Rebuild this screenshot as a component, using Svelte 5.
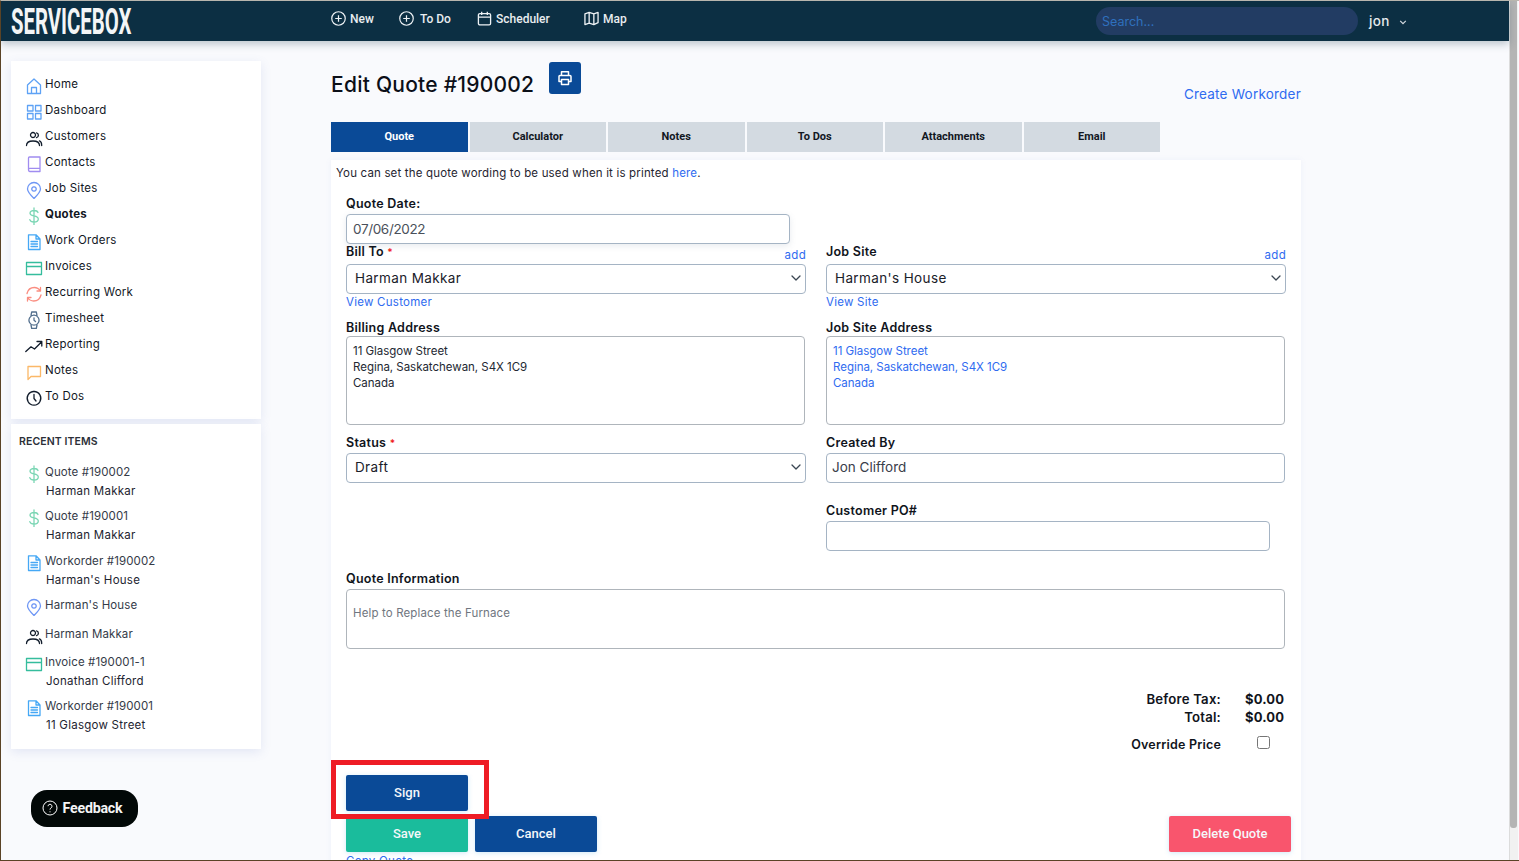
<script>
  const icons = {
    home: { c: '#5ea2f5', d: 'M2.5 8 L9 2 L15.5 8 V16.5 H2.5 Z M6.5 16.5 V10.5 H11.5 V16.5' },
    dash: { c: '#5ea2f5', d: 'M2.5 2.5H8V8H2.5Z M10.5 2.5H16V8H10.5Z M2.5 10.5H8V16H2.5Z M10.5 10.5H16V16H10.5Z' },
    people: { c: '#111c2b', d: 'M8 3.500a2.500 2.500 0 1 1-.01 0 M1.500 16.500c0-3 1.500-4.500 6.500-4.500s6.500 1.500 6.500 4.500 M11.500 3.800c2.500.3 2.500 4.500 0 4.800 M14.500 11.800c1.600.6 2.200 2.200 2.200 4.700' },
    book: { c: '#a08cf0', d: 'M3.500 15V3a1 1 0 0 1 1-1H15V16.500H4.800a1.500 1.500 0 0 1-1.300-1.500Zm0 0a1.500 1.500 0 0 1 1.300-1.700H15' },
    pin: { c: '#6f97f5', d: 'M9 17.500C5 13.500 2.500 11 2.500 8a6.500 6.500 0 0 1 13 0c0 3-2.500 5.500-6.500 9.500Z M9 5.800a2.200 2.200 0 1 1-.01 0' },
    dollar: { c: '#7bd6b4', d: 'M13 5.500C12.500 4 11 3.500 9 3.500 6.500 3.500 5 4.700 5 6.300 5 10 13.300 7.800 13.300 12 13.300 13.800 11.500 15 9 15 6.800 15 5.300 14.200 4.800 12.600 M9 1V18' },
    doc: { c: '#45a8f5', d: 'M3.500 1.800H11L15 6V16.500H3.500Z M11 1.800V6H15 M6 8.500H12.500 M6 11H12.500 M6 13.500H12.500' },
    card: { c: '#35bd9d', d: 'M1.500 3.500H16.500V15.500H1.500Z M1.500 7.500H16.500' },
    sync: { c: '#fa8d80', d: 'M2 8.500C3 4.500 6 2.500 9.300 2.500 12 2.500 14 3.800 15.500 6 M15.500 2.500V6H12 M16 10C15 14 12 16 8.700 16 6 16 4 14.700 2.500 12.500 M2.500 16V12.500H6' },
    watch: { c: '#54708e', d: 'M6 4.500 6.700 1H11.300L12 4.500 M6 14 6.700 17.500H11.300L12 14 M9 4.200a5 5 0 1 1-.01 0 M9 6.800V9.200L10.500 10.500' },
    trend: { c: '#111c2b', d: 'M0.800 14.500 6 9.800 9.500 12 16.500 5 M12 4.500H16.800V9' },
    note: { c: '#fbb868', d: 'M3 3.500H15.500V13.500H6L3 16.500Z' },
    clock: { c: '#111c2b', d: 'M9 2.500a6.800 6.800 0 1 1-.01 0 M9 5.500V9.500L11 12' }
  };

  const nav = [
    ['home', 'Home'], ['dash', 'Dashboard'], ['people', 'Customers'], ['book', 'Contacts'],
    ['pin', 'Job Sites'], ['dollar', 'Quotes', true], ['doc', 'Work Orders'], ['card', 'Invoices'],
    ['sync', 'Recurring Work'], ['watch', 'Timesheet'], ['trend', 'Reporting'], ['note', 'Notes'], ['clock', 'To Dos']
  ];

  const recent = [
    ['dollar', 'Quote #190002', 'Harman Makkar'],
    ['dollar', 'Quote #190001', 'Harman Makkar'],
    ['doc', 'Workorder #190002', "Harman's House"],
    ['pin', "Harman's House"],
    ['people', 'Harman Makkar'],
    ['card', 'Invoice #190001-1', 'Jonathan Clifford'],
    ['doc', 'Workorder #190001', '11 Glasgow Street']
  ];

  const tabs = ['Quote', 'Calculator', 'Notes', 'To Dos', 'Attachments', 'Email'];
</script>

{#snippet icon(name)}
  <svg class="ico" viewBox="0 0 18 18" fill="none" stroke={icons[name].c} stroke-width="1.300" stroke-linejoin="round" stroke-linecap="round">
    <path d={icons[name].d} />
  </svg>
{/snippet}

{#snippet chev()}
  <svg class="chev" viewBox="0 0 10 6" fill="none" stroke="#3a4652" stroke-width="1.300" stroke-linecap="round" stroke-linejoin="round"><path d="M1 1l4 4 4-4" /></svg>
{/snippet}

<div class="page">
  <header class="top">
    <div class="logo"><span>SERVICEBOX</span></div>
    <nav class="topnav">
      <span class="tn new">
        <svg viewBox="0 0 16 16" fill="none" stroke="#eef2f5" stroke-width="1.300"><circle cx="8" cy="8" r="7.200" /><path d="M8 4.500v7M4.500 8h7" /></svg>New
      </span>
      <span class="tn todo">
        <svg viewBox="0 0 16 16" fill="none" stroke="#eef2f5" stroke-width="1.300"><circle cx="8" cy="8" r="7.200" /><path d="M8 4.500v7M4.500 8h7" /></svg>To Do
      </span>
      <span class="tn sched">
        <svg viewBox="0 0 16 16" fill="none" stroke="#eef2f5" stroke-width="1.400"><rect x="1.500" y="2.800" width="13" height="12" rx="1.500" /><path d="M1.500 6.500h13M5 .8v3.500M11 .8v3.500" /></svg>Scheduler
      </span>
      <span class="tn map">
        <svg viewBox="0 0 16 16" fill="none" stroke="#eef2f5" stroke-width="1.400" stroke-linejoin="round"><path d="M1 3 5.500 1.500l5 1.500L15 1.500v11L10.500 14.500l-5-1.500L1 14.500Z M5.500 1.500v11.500M10.500 3v11.500" /></svg>Map
      </span>
    </nav>
    <div class="search">Search...</div>
    <div class="user">jon
      <svg viewBox="0 0 10 6" fill="none" stroke="#d5dbe0" stroke-width="1.500"><path d="M1.500 1l3.500 3.500L8.500 1" /></svg>
    </div>
  </header>

  <div class="body">
    <aside class="side">
      <div class="card navcard">
        {#each nav as [ic, label, active]}
          <div class="navitem" class:active>
            {@render icon(ic)}<span>{label}</span>
          </div>
        {/each}
      </div>
      <div class="card recent">
        <div class="rtitle">RECENT ITEMS</div>
        {#each recent as [ic, a, b]}
          <div class="ritem" class:single={!b}>
            <div class="rline">{@render icon(ic)}<span>{a}</span></div>
            {#if b}<div class="rsub">{b}</div>{/if}
          </div>
        {/each}
      </div>
      <div class="feedback">
        <svg viewBox="0 0 16 16" fill="none" stroke="#fff" stroke-width="1"><circle cx="8" cy="8" r="7" /><path d="M6 6.200a2 2 0 1 1 3 1.800c-.7.400-1 .8-1 1.600" /><path d="M8 11.300v1" /></svg>
        Feedback
      </div>
    </aside>

    <main class="main">
      <div class="titlebar">
        <h1>Edit Quote #190002</h1>
        <button class="print" aria-label="Print">
          <svg viewBox="0 0 16 16" fill="none" stroke="#fff" stroke-width="1.500" stroke-linejoin="round"><path d="M4.500 5.500V1.800h7v3.700M4.500 11.500H2V6.500a1 1 0 0 1 1-1h10a1 1 0 0 1 1 1v5h-2.500" /><path d="M4.500 9.500h7v5h-7z" /></svg>
        </button>
        <a class="create">Create Workorder</a>
      </div>

      <div class="tabs">
        {#each tabs as t, i}
          <div class="tab" class:on={i === 0}>{t}</div>
        {/each}
      </div>

      <section class="panel">
        <p class="hint">You can set the quote wording to be used when it is printed <a>here</a>.</p>

        <div class="form">
          <span class="lab date-l">Quote Date:</span>
          <div class="field date">07/06/2022</div>

          <div class="grid two">
            <div class="col">
              <div class="labrow"><span class="lab">Bill To <i>*</i></span><a class="add">add</a></div>
              <div class="field select">Harman Makkar {@render chev()}</div>
              <a class="sub">View Customer</a>
              <span class="lab gap">Billing Address</span>
              <div class="area">11 Glasgow Street<br />Regina, Saskatchewan, S4X 1C9<br />Canada</div>
              <span class="lab gap2">Status <i>*</i></span>
              <div class="field select status">Draft {@render chev()}</div>
            </div>
            <div class="col">
              <div class="labrow"><span class="lab">Job Site</span><a class="add">add</a></div>
              <div class="field select">Harman's House {@render chev()}</div>
              <a class="sub">View Site</a>
              <span class="lab gap">Job Site Address</span>
              <div class="area blue">11 Glasgow Street<br />Regina, Saskatchewan, S4X 1C9<br />Canada</div>
              <span class="lab gap2">Created By</span>
              <div class="field created">Jon Clifford</div>
              <span class="lab po-l">Customer PO#</span>
              <div class="field po"></div>
            </div>
          </div>

          <span class="lab qi-l">Quote Information</span>
          <div class="area info">Help to Replace the Furnace</div>

          <div class="totals">
            <div class="trow"><span>Before Tax:</span><b>$0.00</b></div>
            <div class="trow"><span>Total:</span><b>$0.00</b></div>
            <div class="trow over"><span>Override Price</span><b><input type="checkbox" /></b></div>
          </div>

          <div class="signrow">
            <button class="btn blue-b">Sign</button>
            <div class="annot"></div>
          </div>
          <div class="actions">
            <button class="btn green">Save</button>
            <button class="btn blue-b">Cancel</button>
            <button class="btn red">Delete Quote</button>
          </div>
          <a class="copy">Copy Quote</a>
        </div>
      </section>
    </main>
  </div>

  <div class="scrollbar"><div class="thumb"></div></div>
</div>

<style>
  :global(body) { margin: 0; background: #f9fafd; overflow: hidden; }
  .page {
    position: relative;
    width: 1519px; height: 861px; overflow: hidden;
    box-sizing: border-box;
    background: #f9fafd;
    border-top: 1px solid #b9b6ae;
    border-left: 1px solid #5a4326;
    border-bottom: 1px solid #5a4326;
    font-family: Inter, "Open Sans", sans-serif;
    color: #12171f;
    font-size: 11.5px;
    letter-spacing: .25px;
  }
  a { color: #2f6bf0; text-decoration: none; }

  .top {
    height: 40px; background: #0c2f43;
    display: flex; align-items: center;
    box-shadow: 0 3px 8px rgba(40,70,90,.3);
    position: relative; z-index: 2;
    width: 1508px; box-sizing: border-box;
  }
  .logo { width: 330px; padding: 2px 0 0 10px; box-sizing: border-box; height: 40px; display: flex; align-items: center; flex: none; }
  .logo span {
    font-family: "Roboto", sans-serif; font-weight: 700; font-size: 36px; color: #f3f5f6; letter-spacing: 0;
    display: inline-block; transform: scaleX(.565); transform-origin: left center; white-space: nowrap;
  }
  .topnav { display: flex; font-family: Roboto, sans-serif; font-size: 12px; font-weight: 500; color: #e9edf0; letter-spacing: 0; height: 40px; align-items: center; padding-bottom: 5px; box-sizing: border-box; }
  .tn { display: flex; align-items: center; gap: 4px; }
  .tn svg { width: 15px; height: 15px; }
  .new { width: 68px; }
  .todo { width: 79px; gap: 6px; }
  .sched { width: 106px; margin-left: -1px; gap: 4px; }
  .map { width: 120px; margin-left: 1px; }
  .search {
    margin-left: auto;
    width: 262px; height: 28px; box-sizing: border-box; padding: 0 6px;
    border-radius: 14px; background: #223c63; color: #2f70bd;
    font-size: 12.500px; line-height: 30px; flex: none; letter-spacing: 0;
    margin-right: 11px;
  }
  .user { width: 140px; flex: none; font-size: 13.5px; color: #e6eaed; font-weight: 500; display: flex; align-items: center; letter-spacing: .3px; box-sizing: border-box; }
  .user svg { width: 8px; height: 5px; margin-left: 9px; margin-top: 3px; }

  .body { display: flex; height: 819px; }
  .side { width: 330px; flex: none; padding: 20px 0 0 10px; box-sizing: border-box; }
  .card { width: 250px; background: #fff; box-shadow: 0 3px 10px rgba(90,110,190,.14); box-sizing: border-box; }
  .navcard { height: 358px; padding: 11px 0 0 14px; }
  .navitem { height: 26px; display: flex; align-items: center; gap: 1px; }
  .navitem span { position: relative; top: -1px; }
  .navitem.active { font-weight: 700; }
  .ico { width: 18px; height: 18px; flex: none; position: relative; top: 1px; margin-right: 1px; }

  .recent { margin-top: 5px; height: 325px; padding: 11px 0 0 8px; color: #353b48; }
  .rtitle { font-weight: 600; font-size: 10.500px; letter-spacing: .1px; margin-bottom: 16px; color: #2b2f38; line-height: 13px; }
  .ritem { padding-left: 6px; height: 44.400px; }
  .ritem.single { height: 28.400px; }
  .rline { display: flex; align-items: center; height: 18px; gap: 1px; letter-spacing: .12px; }
  .rline span { position: relative; top: -1px; }
  .rsub { padding-left: 21px; line-height: 18px; margin-top: 0; color: #1d2430; }

  .feedback {
    margin: 41px 0 0 20px;
    width: 107px; height: 37px; border-radius: 16px; background: #020807; color: #f4f5f5;
    display: flex; align-items: center; justify-content: center; gap: 5px;
    font-family: Roboto, sans-serif; font-weight: 700; font-size: 14.200px; letter-spacing: -.2px;
    box-sizing: border-box; padding: 0 5px 2px 0;
  }
  .feedback svg { width: 16px; height: 16px; }

  .main { width: 970px; flex: none; }
  .titlebar { height: 81px; position: relative; display: flex; align-items: flex-start; }
  h1 { margin: 31px 0 0; font-size: 21px; font-weight: 500; line-height: 26px; color: #0b0f18; letter-spacing: .24px; }
  .print { width: 32px; height: 32px; margin: 21px 0 0 15px; border: none; border-radius: 3px; background: #0a4a97; display: flex; align-items: center; justify-content: center; padding: 0; }
  .print svg { width: 16px; height: 16px; }
  .create { margin: 44px 0 0 auto; font-size: 13.500px; line-height: 18px; letter-spacing: .22px; }

  .tabs { display: flex; gap: 2px; height: 30px; }
  .tab { width: 136.500px; background: #d3dae1; font-family: Roboto, sans-serif; font-size: 11px; font-weight: 700; color: #12171f; letter-spacing: 0; display: flex; align-items: center; justify-content: center; padding-bottom: 2px; box-sizing: border-box; }
  .tab.on { background: #0a4a97; color: #fff; }

  .panel { margin-top: 8px; background: #fff; height: 720px; box-shadow: 0 0 6px rgba(120,130,200,.08); box-sizing: border-box; padding: 6px 5px; overflow: hidden; }
  .hint { margin: 0; font-size: 11.500px; line-height: 14px; color: #1f2530; letter-spacing: .17px; }
  .form { padding: 16px 0 0 10px; display: flex; flex-direction: column; align-items: flex-start; }
  .lab { display: block; font-weight: 600; font-size: 12.500px; line-height: 15px; color: #10141c; letter-spacing: .25px; }
  .lab i { color: #f01919; font-style: normal; font-size: 10px; line-height: 0; }
  .date-l { margin-bottom: 3px; }
  .field {
    height: 30px; box-sizing: border-box; border: 1px solid #a5b4c4; border-radius: 4px; background: #fff;
    font-size: 13.500px; line-height: 27px; padding-left: 6px; color: #3a404a; letter-spacing: .25px;
  }
  .date { width: 444px; box-shadow: 0 2px 6px rgba(100,120,150,.15); letter-spacing: -.35px; color: #4a505a; line-height: 29px; }
  .two { display: grid; grid-template-columns: 460px 460px; column-gap: 20px; margin-top: 0; width: 940px; }
  .col { min-width: 0; }
  .labrow { display: flex; justify-content: space-between; align-items: flex-end; height: 20px; }
  .labrow .lab { position: relative; top: -5px; }
  .add { font-size: 11.500px; line-height: 14px; position: relative; top: -2px; letter-spacing: .3px; }
  .select { position: relative; padding-left: 8px; color: #1a2029; letter-spacing: .38px; }
  .chev { position: absolute; right: 4px; top: 10px; width: 10px; height: 6px; }
  .sub { display: block; font-size: 11.500px; line-height: 16px; height: 16px; letter-spacing: .25px; }
  .gap { margin-top: 10px; margin-bottom: 1px; }
  .gap2 { margin-top: 10px; margin-bottom: 3px; }
  .area {
    box-sizing: border-box; width: 459px; height: 89px; border: 1px solid #afb5bb; border-radius: 4px;
    padding: 6px 6px; font-size: 11.500px; line-height: 16px; color: #232832; letter-spacing: -.03px;
  }
  .area.blue { color: #2f6bf0; }
  .created { width: 459px; color: #3a404a; letter-spacing: 0; padding-left: 5px; }
  .po-l { margin-top: 20px; margin-bottom: 3px; }
  .po { width: 444px; border-color: #a5b4c4; }
  .qi-l { margin-top: 20px; margin-bottom: 3px; }
  .info { width: 939px; height: 60px; padding-top: 15px; color: #707680; letter-spacing: .13px; }

  .totals { width: 938px; margin-top: 41px; }
  .trow { display: flex; justify-content: flex-end; height: 18px; line-height: 18px; font-weight: 600; font-size: 13.200px; color: #10141c; letter-spacing: .2px; }
  .trow b { width: 63px; text-align: right; font-weight: 700; font-size: 13px; letter-spacing: .1px; }
  .over { height: 18px; margin-top: 10px; font-size: 12.500px; }
  .over b { position: relative; }
  .over input { position: absolute; left: 36px; top: 0; margin: 0; width: 13px; height: 13px; }

  .signrow { position: relative; margin-top: 21px; height: 36px; }
  .btn { width: 122px; height: 36px; border: none; border-radius: 2px; color: #f5f7fa; font-family: Roboto, sans-serif; font-size: 13px; font-weight: 500; padding: 0 0 2px; box-shadow: 0 1px 5px rgba(70,170,230,.25); }
  .blue-b { background: #0a4a97; }
  .green { background: #1abc9c; }
  .red { background: #f9556d; margin-left: auto; margin-right: 0; }
  .annot { position: absolute; left: -15px; top: -15px; width: 158px; height: 59px; box-sizing: border-box; border: 5px solid #ee1c25; pointer-events: none; }
  .actions { display: flex; gap: 7px; width: 945px; margin-top: 5px; }
  .copy { font-size: 11.500px; line-height: 16px; display: block; margin-top: 1px; }

  .scrollbar { position: absolute; right: 1px; top: 0; width: 9px; height: 100%; background: #f1f1f1; border-left: 1px solid #dcdcdc; box-sizing: border-box; }
  .thumb { width: 7px; margin: 0 1px 0 0; height: 827px; background: #b4b4b4; border-radius: 0 0 3px 3px; }
</style>
